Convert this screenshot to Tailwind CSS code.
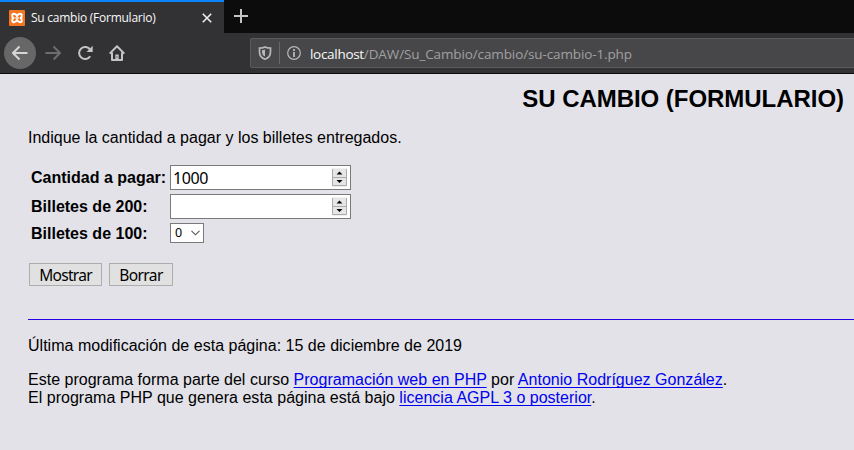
<!DOCTYPE html>
<html lang="es">
<head>
<meta charset="utf-8">
<title>Su cambio (Formulario)</title>
<script src="https://cdn.jsdelivr.net/npm/@tailwindcss/browser@4"></script>
</head>
<body class="w-[854px] h-[450px] overflow-hidden bg-[#e3e2e9] text-black font-['Liberation_Sans',Arial,sans-serif] text-[16px] leading-[18px]">
<header class="h-[74px] flex flex-col bg-[#323234] border-b border-[#0c0c0d] font-['Open_Sans',sans-serif] overflow-hidden">
  <div class="flex h-[33px] bg-[#0c0c0d]">
    <div class="w-[224px] h-[33px] bg-[#323234] border-t-2 border-[#0a84ff] flex items-center pl-[9px] pr-3">
      <svg class="w-4 h-4 shrink-0" viewBox="0 0 16 16"><rect width="16" height="16" rx="1" fill="#f37623"/><path d="M8 6.200C7.200 4.300 6.200 3.800 5 3.800 2.600 3.800 2.600 7 4.600 8 2.600 9 2.600 12.200 5 12.200c1.200 0 2.200-.5 3-2.400.8 1.900 1.800 2.400 3 2.400 2.400 0 2.400-3.200.4-4.200 2-1 2-4.200-.4-4.200-1.200 0-2.200.5-3 2.400z" fill="none" stroke="#fff" stroke-width="1.900" stroke-linejoin="round"/><path d="M6.300 8h3.400" stroke="#fff" stroke-width="1.500"/></svg>
      <span class="ml-[6px] text-[12px] leading-4 tracking-[-0.25px] text-[#f9f9fa] whitespace-nowrap">Su cambio (Formulario)</span>
      <svg class="w-[10px] h-[10px] ml-auto" viewBox="0 0 10 10"><path d="M.8.8l8.400 8.400M9.200.8L.8 9.200" stroke="#eee" stroke-width="1.600"/></svg>
    </div>
    <svg class="w-[14px] h-[14px] ml-[10px] mt-[9px]" viewBox="0 0 14 14"><path d="M7 0v14M0 7h14" stroke="#c4c4c5" stroke-width="2"/></svg>
  </div>
  <div class="flex h-10 items-center pl-1">
    <div class="w-8 h-8 shrink-0 rounded-full bg-[#676768] flex items-center justify-center">
      <svg class="w-4 h-4" viewBox="0 0 16 16"><path d="M15.500 8H1.500M7.500 1.500L1 8l6.500 6.500" fill="none" stroke="#d6d6d7" stroke-width="2"/></svg>
    </div>
    <svg class="w-4 h-4 shrink-0 ml-[9px]" viewBox="0 0 16 16"><path d="M.5 8h14M8.500 1.500L15 8l-6.500 6.500" fill="none" stroke="#6d6d6e" stroke-width="2"/></svg>
    <svg class="w-4 h-4 shrink-0 ml-4" viewBox="0 0 16 16"><path d="M13.200 4.800A6 6 0 1 0 13.200 11.200" fill="none" stroke="#c4c4c5" stroke-width="2"/><path d="M15.700.8v6.200H9.500z" fill="#c4c4c5"/></svg>
    <svg class="w-4 h-4 shrink-0 ml-4" viewBox="0 0 16 16"><path d="M.7 8.600L8 1.300l7.300 7.300M3 7.500V15h10V7.500" fill="none" stroke="#c4c4c5" stroke-width="2" stroke-linejoin="round"/><path d="M6.300 14V9.500h3.400V14" fill="#c4c4c5"/><path d="M8 11.500v1" stroke="#323234"/></svg>
    <div class="ml-[125px] w-[620px] h-[30px] shrink-0 border border-[#5b5b5d] rounded-[2px] bg-[#474749] flex items-center pl-[7px]">
      <svg class="w-[14px] h-[14px] shrink-0" viewBox="0 0 14 14"><path d="M7 .9C5.300 1.700 3.500 2 1.500 2v4c0 3.500 2 6 5.500 7.200C10.500 12 12.500 9.500 12.500 6V2C10.500 2 8.700 1.700 7 .9z" fill="none" stroke="#b8b8b9" stroke-width="1.700"/><path d="M7 3.600v7C5 9.600 4 8 4 6V4.200c1 0 2-.2 3-.6z" fill="#b8b8b9"/></svg>
      <span class="ml-[7px] w-px h-[22px] shrink-0 bg-[#68686a]"></span>
      <svg class="w-[14px] h-[14px] ml-[7px] shrink-0" viewBox="0 0 14 14"><circle cx="7" cy="7" r="6.300" fill="none" stroke="#b8b8b9" stroke-width="1.200"/><path d="M7 3v2M7 6v5" stroke="#b8b8b9" stroke-width="1.800"/></svg>
      <span class="ml-[9px] mt-[2px] text-[13.500px] leading-[18px] tracking-[-0.12px] text-[#a0a0a2] whitespace-nowrap"><span class="text-[#f9f9fa] tracking-[-0.3px]">localhost</span>/DAW/Su_Cambio/cambio/su-cambio-1.php</span>
    </div>
  </div>
</header>
<main class="pl-7">
  <h1 class="pt-[11px] pr-[10px] text-right text-[24px] leading-[28px] tracking-[-0.04px] font-bold">SU CAMBIO (FORMULARIO)</h1>
  <p class="mt-[16px]">Indique la cantidad a pagar y los billetes entregados.</p>
  <form class="mt-[18px]">
    <div class="grid grid-cols-[139px_181px] gap-x-[3px] gap-y-1 items-center font-bold">
      <label class="pl-[3px] whitespace-nowrap">Cantidad a pagar:</label>
      <div class="w-[181px] h-[25px] border border-[#7a7a7a] bg-white flex items-center pl-[2px] pr-[3px] justify-between font-['Noto_Sans',sans-serif] font-normal">
        <span class="text-[16px] tracking-[-0.4px]">1000</span>
        <svg class="w-[15px] h-[19px]" viewBox="0 0 15 19"><path d="M0 0h15v19H0z" fill="#f0f0f0"/><path d="M.5 1v16.500h14V1M1 9.500h13" fill="#e6e6e6" stroke="#ababab"/><path d="M4.500 6.500h6l-3-3zM4.500 12h6l-3 3z" fill="#000"/></svg>
      </div>
      <label class="pl-[3px]">Billetes de 200:</label>
      <div class="w-[181px] h-[25px] border border-[#7a7a7a] bg-white flex items-center pr-[3px] justify-end">
        <svg class="w-[15px] h-[19px]" viewBox="0 0 15 19"><path d="M0 0h15v19H0z" fill="#f0f0f0"/><path d="M.5 1v16.500h14V1M1 9.500h13" fill="#e6e6e6" stroke="#ababab"/><path d="M4.500 6.500h6l-3-3zM4.500 12h6l-3 3z" fill="#000"/></svg>
      </div>
      <label class="pl-[3px] pt-[2px]">Billetes de 100:</label>
      <div class="w-[34px] h-5 border border-[#7a7a7a] bg-white flex items-center pl-1 pr-[3px] justify-between font-['Noto_Sans',sans-serif] font-normal">
        <span class="text-[12.500px]">0</span>
        <svg class="w-[9px] h-[6px]" viewBox="0 0 9 6"><path d="M.5.8l4 4 4-4" fill="none" stroke="#555" stroke-width="1.100"/></svg>
      </div>
    </div>
    <div class="flex gap-[7px] mt-5 pl-px font-['Noto_Sans',sans-serif]">
      <button type="button" class="w-[73px] h-[23px] border border-[#adadad] bg-[#e1e1e1] text-[15.500px] leading-[22px] tracking-[-0.7px]">Mostrar</button>
      <button type="button" class="w-[64px] h-[23px] border border-[#adadad] bg-[#e1e1e1] text-[15.500px] leading-[22px] tracking-[-0.6px]">Borrar</button>
    </div>
  </form>
  <footer class="mt-[33px] border-t border-[#2a00e6] pt-[17px] tracking-[0.015px]">
    <p>Última modificación de esta página: 15 de diciembre de 2019</p>
    <p class="mt-4 whitespace-nowrap">Este programa forma parte del curso <a class="text-[#0000ee] underline decoration-1 underline-offset-2 [text-decoration-skip-ink:none]" href="#">Programación web en PHP</a> por <a class="text-[#0000ee] underline decoration-1 underline-offset-2 [text-decoration-skip-ink:none]" href="#">Antonio Rodríguez González</a>.<br>El programa PHP que genera esta página está bajo <a class="text-[#0000ee] underline decoration-1 underline-offset-2 [text-decoration-skip-ink:none]" href="#">licencia AGPL 3 o posterior</a>.</p>
  </footer>
</main>
</body>
</html>
